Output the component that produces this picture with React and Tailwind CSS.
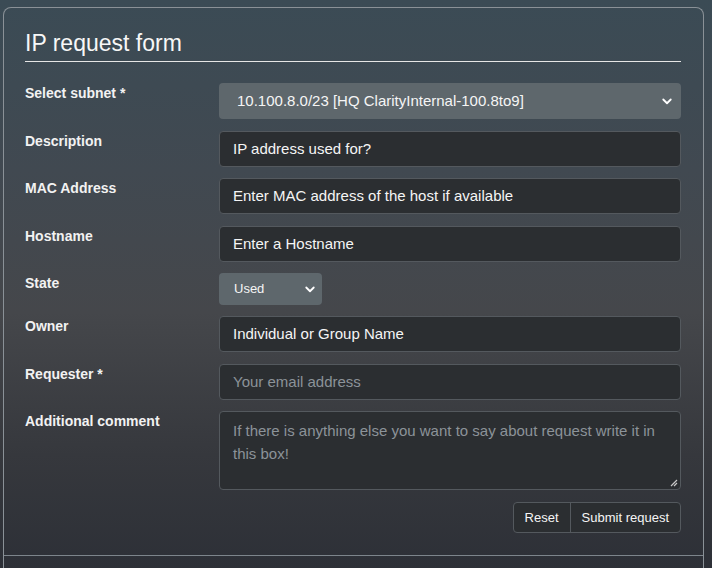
import React from "react";

const font = { fontFamily: '"Liberation Sans", Arial, sans-serif' };

function Chevron({ className = "" }) {
  return (
    <svg className={className} width="12" height="12" viewBox="0 0 16 16" fill="none">
      <path d="M3 6l5 5 5-5" stroke="#ffffff" strokeWidth="2.4" strokeLinecap="round" strokeLinejoin="round" />
    </svg>
  );
}

function Label({ children }) {
  return (
    <div className="w-[194px] shrink-0 pt-[1px] text-[14px] leading-[18px] font-bold text-[#f2f2f2]">
      {children}
    </div>
  );
}

function TextInput({ value, placeholder }) {
  return (
    <div className="flex-1 h-[36px] rounded-[4px] border border-[#54595e] bg-[#2b2e31] px-[13px] flex items-center text-[15px]">
      {value ? (
        <span className="text-[#f5f5f5]">{value}</span>
      ) : (
        <span className="text-[#8c9399]">{placeholder}</span>
      )}
    </div>
  );
}

export default function App() {
  return (
    <div
      className="w-[712px] h-[568px] overflow-hidden bg-[linear-gradient(180deg,#3b4b55_0%,#414951_30%,#45474b_55%,#36383d_80%,#2d3037_100%)]"
      style={font}
    >
      <div className="ml-[3px] mt-[7px] w-[701px] rounded-t-[8px] border border-[#8a9197] border-b-0">
        <div className="pl-[21px] pr-[22px] pt-[21px] pb-[22px]">
          <div className="border-b border-[#e6e6e6] pb-[3px] text-[23px] leading-[29px] text-[#f7f7f7]">
            IP request form
          </div>
          <div className="mt-[21px] flex flex-col">
            <div className="flex">
              <Label>Select subnet *</Label>
              <div className="flex-1 h-[36px] rounded-[4px] bg-[#5e676c] pl-[18px] pr-[8px] flex items-center justify-between text-[15px] text-[#f5f5f5]">
                <span>10.100.8.0/23 [HQ ClarityInternal-100.8to9]</span>
                <Chevron />
              </div>
            </div>
            <div className="flex mt-[12px]">
              <Label>Description</Label>
              <TextInput value="IP address used for?" />
            </div>
            <div className="flex mt-[11px]">
              <Label>MAC Address</Label>
              <TextInput value="Enter MAC address of the host if available" />
            </div>
            <div className="flex mt-[12px]">
              <Label>Hostname</Label>
              <TextInput value="Enter a Hostname" />
            </div>
            <div className="flex mt-[11px]">
              <Label>State</Label>
              <div className="w-[103px] h-[32px] rounded-[4px] bg-[#5e676c] pl-[15px] pr-[6px] flex items-center justify-between text-[13px] text-[#f5f5f5]">
                <span>Used</span>
                <Chevron />
              </div>
            </div>
            <div className="flex mt-[11px]">
              <Label>Owner</Label>
              <TextInput value="Individual or Group Name" />
            </div>
            <div className="flex mt-[12px]">
              <Label>Requester *</Label>
              <TextInput placeholder="Your email address" />
            </div>
            <div className="flex mt-[11px]">
              <Label>Additional comment</Label>
              <div className="relative flex-1 h-[79px] rounded-[4px] border border-[#54595e] bg-[#2b2e31] px-[13px] pt-[7px] text-[15px] leading-[23px] text-[#8c9399]">
                If there is anything else you want to say about request write it in this box!
                <svg className="absolute right-[2px] bottom-[2px]" width="8" height="8" viewBox="0 0 8 8">
                  <path d="M7 1L1 7M7 4L4 7" stroke="#c8c8c8" strokeWidth="1.2" />
                </svg>
              </div>
            </div>
            <div className="flex justify-end mt-[12px]">
              <div className="flex h-[31px] rounded-[4px] border border-[#54595e] bg-[#2b2e31] text-[13px] text-[#f5f5f5]">
                <div className="px-[11px] flex items-center border-r border-[#54595e]">Reset</div>
                <div className="px-[11px] flex items-center">Submit request</div>
              </div>
            </div>
          </div>
        </div>
        <div className="border-t border-[#7d858c] h-[40px]"></div>
      </div>
    </div>
  );
}
